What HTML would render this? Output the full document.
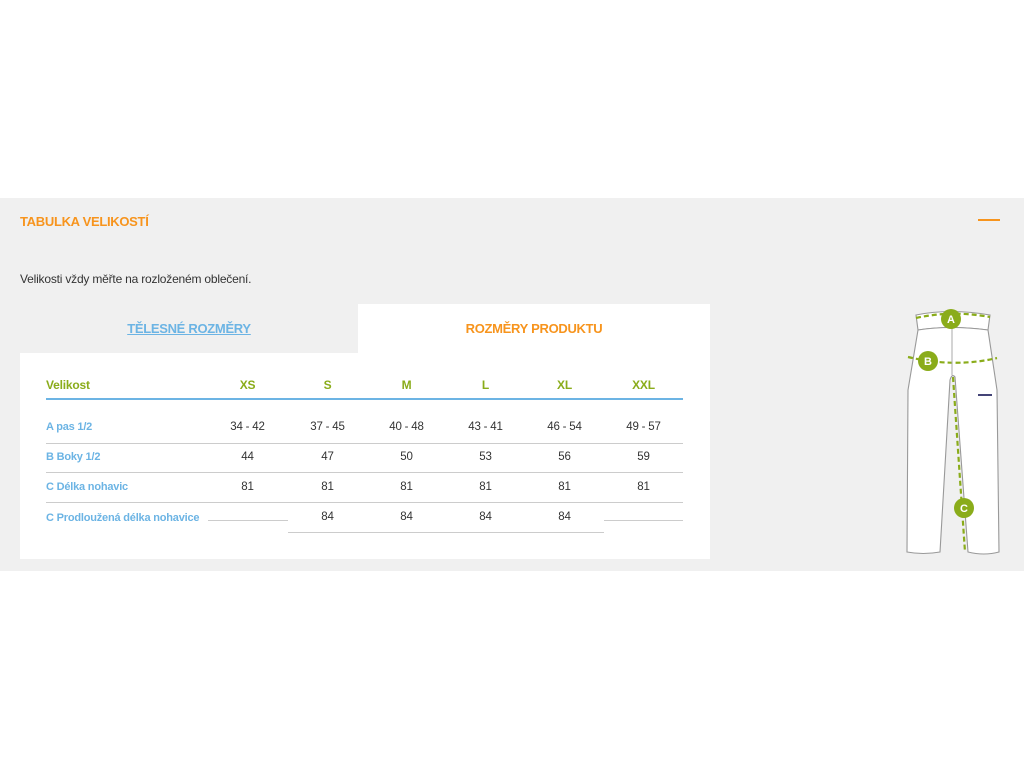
<!DOCTYPE html>
<html><head><meta charset="utf-8"><style>
*{margin:0;padding:0;box-sizing:border-box}
body{width:1024px;height:768px;background:#fff;font-family:"Liberation Sans",sans-serif;position:relative;overflow:hidden}
.sec{position:absolute;left:0;top:198px;width:1024px;height:373px;background:#f0f0f0}
.title{position:absolute;left:20px;top:214px;font-size:13px;font-weight:bold;color:#f7941d;letter-spacing:-0.3px}
.dash{position:absolute;left:978px;top:219px;width:22px;height:2px;background:#f7941d}
.note{position:absolute;left:20px;top:272px;font-size:12px;color:#333;letter-spacing:-0.2px}
.tab1{position:absolute;left:20px;top:321px;width:338px;text-align:center;font-size:13px;font-weight:bold;color:#6cb4e4;text-decoration:underline;letter-spacing:-0.3px}
.tab2{position:absolute;left:358px;top:304px;width:352px;height:50px;background:#fff;text-align:center;padding-top:17px;font-size:13px;font-weight:bold;color:#f7941d;letter-spacing:-0.3px}
.box{position:absolute;left:20px;top:353px;width:690px;height:206px;background:#fff}
.t{position:absolute;font-size:11.5px;letter-spacing:-0.2px}
.h{color:#8aac1a;font-weight:bold;font-size:12px}
.l{color:#6cb4e4;font-weight:bold;font-size:11px}
.v{color:#333;width:79px;text-align:center}
.hl{position:absolute;height:1px;background:#ccc}
</style></head><body>
<div class="sec"></div>
<div class="title">TABULKA VELIKOSTÍ</div>
<div class="dash"></div>
<div class="note">Velikosti vždy měřte na rozloženém oblečení.</div>
<div class="tab1">TĚLESNÉ ROZMĚRY</div>
<div class="tab2">ROZMĚRY PRODUKTU</div>
<div class="box"></div>
<div class="t h" style="left:46px;top:378px">Velikost</div>
<div class="t h v" style="left:208px;top:378px;color:#8aac1a">XS</div>
<div class="t h v" style="left:288px;top:378px;color:#8aac1a">S</div>
<div class="t h v" style="left:367px;top:378px;color:#8aac1a">M</div>
<div class="t h v" style="left:446px;top:378px;color:#8aac1a">L</div>
<div class="t h v" style="left:525px;top:378px;color:#8aac1a">XL</div>
<div class="t h v" style="left:604px;top:378px;color:#8aac1a">XXL</div>
<div class="hl" style="left:46px;top:398px;width:637px;height:2px;background:#6cb4e4"></div>

<div class="t l" style="left:46px;top:421px">A pas 1/2</div>
<div class="t v" style="left:208px;top:421px">34 - 42</div>
<div class="t v" style="left:288px;top:421px">37 - 45</div>
<div class="t v" style="left:367px;top:421px">40 - 48</div>
<div class="t v" style="left:446px;top:421px">43 - 41</div>
<div class="t v" style="left:525px;top:421px">46 - 54</div>
<div class="t v" style="left:604px;top:421px">49 - 57</div>
<div class="hl" style="left:46px;top:443px;width:637px"></div>

<div class="t l" style="left:46px;top:451px">B Boky 1/2</div>
<div class="t v" style="left:208px;top:451px">44</div>
<div class="t v" style="left:288px;top:451px">47</div>
<div class="t v" style="left:367px;top:451px">50</div>
<div class="t v" style="left:446px;top:451px">53</div>
<div class="t v" style="left:525px;top:451px">56</div>
<div class="t v" style="left:604px;top:451px">59</div>
<div class="hl" style="left:46px;top:472px;width:637px"></div>

<div class="t l" style="left:46px;top:481px">C Délka nohavic</div>
<div class="t v" style="left:208px;top:481px">81</div>
<div class="t v" style="left:288px;top:481px">81</div>
<div class="t v" style="left:367px;top:481px">81</div>
<div class="t v" style="left:446px;top:481px">81</div>
<div class="t v" style="left:525px;top:481px">81</div>
<div class="t v" style="left:604px;top:481px">81</div>
<div class="hl" style="left:46px;top:502px;width:637px"></div>

<div class="t l" style="left:46px;top:512px">C Prodloužená délka nohavice</div>
<div class="hl" style="left:208px;top:520px;width:80px"></div>
<div class="t v" style="left:288px;top:511px">84</div>
<div class="t v" style="left:367px;top:511px">84</div>
<div class="t v" style="left:446px;top:511px">84</div>
<div class="t v" style="left:525px;top:511px">84</div>
<div class="hl" style="left:288px;top:532px;width:316px"></div>
<div class="hl" style="left:604px;top:520px;width:79px"></div>

<svg style="position:absolute;left:880px;top:300px" width="144" height="270" viewBox="0 0 144 270">
<g fill="#fff" stroke="#999" stroke-width="1.1">
<path d="M36 15 Q70 8 110 15 L108 30 Q70 25 38 30 Z"/>
<path d="M38 30 Q70 25 108 30 L117 90 L119 252 Q104 256 88 252 L75 77 Q72 73 70 80 L60 252 Q43 255 27 252 L28 90 Z"/>
</g>
<g fill="none" stroke="#8aac1a" stroke-width="2.2" stroke-dasharray="5 3">
<path d="M36 18 Q72 10 110 17"/>
<path d="M28 57 Q75 68 117 58"/>
<path d="M73 77 L85 252"/>
</g>
<line x1="72" y1="25" x2="72" y2="75" stroke="#aaa" stroke-width="1"/>
<rect x="98" y="94" width="14" height="2" fill="#447"/>
<g fill="#8aac1a"><circle cx="71" cy="19" r="10"/><circle cx="48" cy="61" r="10"/><circle cx="84" cy="208" r="10"/></g>
<g fill="#fff" font-family="Liberation Sans" font-weight="bold" font-size="11" text-anchor="middle">
<text x="71" y="23">A</text><text x="48" y="65">B</text><text x="84" y="212">C</text></g>
</svg>
</body></html>
